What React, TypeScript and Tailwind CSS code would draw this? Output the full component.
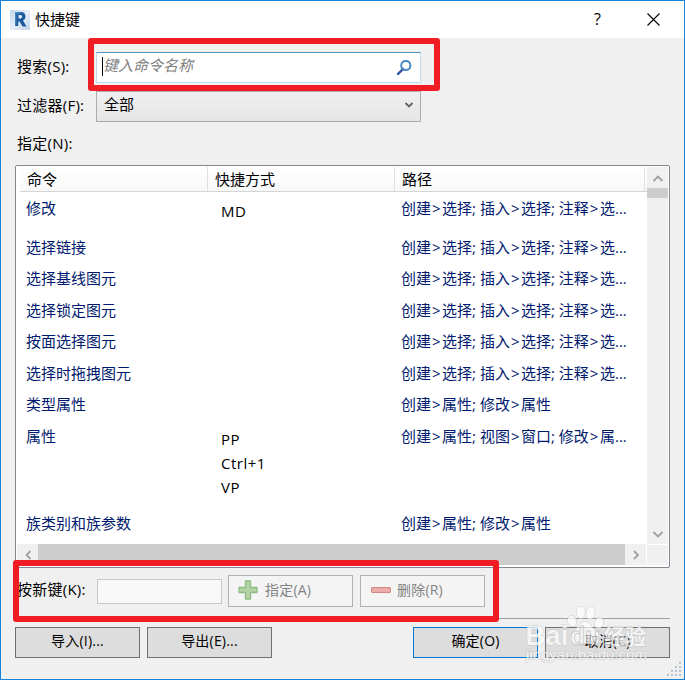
import { Fragment, ReactNode } from 'react';

interface ShortcutRow {
    command: string;
    keys: string[];
    path: string;
}

const SELECT_PATH = '创建>选择; 插入>选择; 注释>选...';

const ROWS: ShortcutRow[] = [
    { command: '修改', keys: ['MD'], path: SELECT_PATH },
    { command: '选择链接', keys: [], path: SELECT_PATH },
    { command: '选择基线图元', keys: [], path: SELECT_PATH },
    { command: '选择锁定图元', keys: [], path: SELECT_PATH },
    { command: '按面选择图元', keys: [], path: SELECT_PATH },
    { command: '选择时拖拽图元', keys: [], path: SELECT_PATH },
    { command: '类型属性', keys: [], path: '创建>属性; 修改>属性' },
    { command: '属性', keys: ['PP', 'Ctrl+1', 'VP'], path: '创建>属性; 视图>窗口; 修改>属...' },
    { command: '族类别和族参数', keys: [], path: '创建>属性; 修改>属性' },
];

function Chevron({ d, className = 'text-[#a0a0a0]' }: { d: string; className?: string }) {
    return (
        <svg width="12" height="12" viewBox="0 0 12 12" fill="none" stroke="currentColor" strokeWidth="1.800" className={className}>
            <path d={d} />
        </svg>
    );
}

function DialogButton({ children, primary = false }: { children: ReactNode; primary?: boolean }) {
    return (
        <button
            className={`w-[125px] h-[31px] border bg-[#dddddd] flex items-center justify-center pb-[3px] text-[14px] tracking-[0.2px] ${
                primary ? 'border-[#0078d7]' : 'border-[#707070]'
            }`}
        >
            {children}
        </button>
    );
}

function CommandPath({ path }: { path: string }) {
    return (
        <div className="whitespace-nowrap">
            {path.split('>').map((part, i) => (
                <Fragment key={i}>
                    {i > 0 && <span className="ml-[1px] mr-[1.500px]">&gt;</span>}
                    {part}
                </Fragment>
            ))}
        </div>
    );
}

function TitleBar() {
    return (
        <div className="h-[37px] bg-white flex items-center shrink-0 pl-[9px] pr-[24px]">
            <svg width="20" height="20" viewBox="0 0 20 20">
                <defs>
                    <linearGradient id="tile" x1="0" y1="0" x2="1" y2="1">
                        <stop offset="0" stopColor="#c3d6ea" />
                        <stop offset="0.5" stopColor="#e8f0f8" />
                        <stop offset="1" stopColor="#bfd2e8" />
                    </linearGradient>
                </defs>
                <rect width="20" height="20" fill="url(#tile)" />
                <path d="M5 2h6.500q4 .5 4 4.500q0 3-2.500 4l3.500 6h-4l-3-5H8.300V16H5z" fill="#1c5a9c" />
                <path d="M5 2h6l-2 2H6.500v10L5 16z" fill="#3c86c4" />
                <path d="M8.500 5h2q1.600.2 1.600 1.700T10.500 8.500h-2z" fill="#dce9f5" />
            </svg>
            <span className="ml-[5px] -mt-[2px]">快捷键</span>
            <span className="ml-auto -mt-[2px] text-[16px]">?</span>
            <svg width="13" height="13" viewBox="0 0 13 13" stroke="#000" strokeWidth="1.100" className="ml-[46px]">
                <path d="M.5.5l12 12M12.500.5l-12 12" />
            </svg>
        </div>
    );
}

function ShortcutList() {
    return (
        <div className="w-[655px] h-[403px] bg-white border border-[#828790] rounded-[2px] p-px pb-[2px] flex flex-col">
            <div className="flex h-[377px]">
                <div className="w-[630px] flex flex-col overflow-hidden">
                    <div className="ml-[3px] h-[25px] shrink-0 flex bg-linear-to-b from-white to-[#f7f8f8] border-b border-[#d5d5d5] leading-[24px]">
                        <div className="w-[188px] pl-[7px] border-r border-[#dfdfdf]">命令</div>
                        <div className="w-[187px] pl-[7px] border-r border-[#dfdfdf]">快捷方式</div>
                        <div className="w-[250px] pl-[7px] border-r border-[#dfdfdf]">路径</div>
                    </div>
                    <div className="pt-[0.500px] text-[#00196e]">
                        {ROWS.map((row) => (
                            <div key={row.command} className="flex min-h-[31.500px] leading-[31.500px]">
                                <div className="w-[204px] pl-[9px]">{row.command}</div>
                                <div className="w-[180px] text-black leading-6 tracking-[0.500px]">
                                    {row.keys.length > 0 && (
                                        <div className="pt-[6px] pb-[9px]">
                                            {row.keys.map((key) => (
                                                <div key={key}>{key}</div>
                                            ))}
                                        </div>
                                    )}
                                </div>
                                <CommandPath path={row.path} />
                            </div>
                        ))}
                    </div>
                </div>
                {/* Vertical scrollbar */}
                <div className="w-[21px] bg-[#f0f0f0] flex flex-col items-center">
                    <div className="h-[21px] flex items-center">
                        <Chevron d="M1.500 9L6 4.500 10.500 9" />
                    </div>
                    <div className="w-full h-[10px] bg-[#cdcdcd]" />
                    <div className="mt-auto h-[20px] flex items-center">
                        <Chevron d="M1.500 4L6 8.500 10.500 4" />
                    </div>
                </div>
            </div>
            {/* Horizontal scrollbar */}
            <div className="flex h-[21px] bg-[#f0f0f0]">
                <div className="w-[21px] flex items-center justify-center">
                    <Chevron d="M8.500 2l-4 4 4 4" />
                </div>
                <div className="w-[587px] bg-[#cdcdcd]" />
                <div className="w-[22px] flex items-center justify-center border-r border-white">
                    <Chevron d="M4 2l4 4-4 4" />
                </div>
                <div className="flex-1 border-t border-white" />
            </div>
        </div>
    );
}

function Watermark() {
    return (
        <svg className="absolute left-[520px] top-[602px] opacity-70" width="140" height="68" viewBox="0 0 140 68">
            <g fill="#fff" stroke="#bdbdbd" strokeWidth="1" paintOrder="stroke">
                <ellipse cx="51" cy="18" rx="4.200" ry="5.500" transform="rotate(-15 51 18)" />
                <ellipse cx="59.700" cy="9.500" rx="4.200" ry="6" />
                <ellipse cx="69.500" cy="10" rx="4.200" ry="6" transform="rotate(10 69.500 10)" />
                <ellipse cx="78" cy="20" rx="4.200" ry="5.500" transform="rotate(15 78 20)" />
                <path d="M64 19c-5 0-6 4-9 7s-6 5-6 9 3 6 7 6 5-1 8-1 6 1 9 1 7-2 7-6-4-6-7-9-4-7-9-7z" />
                <text x="4.500" y="42" fontSize="28" fontWeight="bold" fontFamily="Liberation Sans" textLength="43" lengthAdjust="spacingAndGlyphs">Bai</text>
                <text x="83" y="41" fontSize="21" fontWeight="bold" fontFamily="Noto Sans CJK SC" textLength="42" lengthAdjust="spacingAndGlyphs">经验</text>
                <text x="5" y="56" fontSize="13.500" fontFamily="Liberation Sans" textLength="121" lengthAdjust="spacingAndGlyphs">jingyan.baidu.com</text>
            </g>
            <text x="49" y="42" fontSize="25" fontWeight="bold" fontFamily="Liberation Sans" fill="none" stroke="#c4c4c4" strokeWidth="0.900">du</text>
        </svg>
    );
}

export default function App() {
    return (
        <div className="relative w-[685px] h-[680px] bg-[#f0f0f0] border border-[#1883d7] flex flex-col overflow-hidden text-[15px] leading-[20px] text-black font-['Open_Sans','Noto_Sans_CJK_SC',sans-serif]">
            <TitleBar />

            <div className="pl-[14px] flex flex-col">
                <div className="mt-[14px] flex h-[31px] items-center">
                    <label className="w-[81px] pl-[2px] -mt-[4px] tracking-[0.250px]">搜索(S):</label>
                    <div className="w-[325px] h-[31px] bg-white border border-[#bfdcee] border-t-[#5093c5] flex items-center pl-[5px] pr-[8px]">
                        <span className="w-px h-[19px] -mt-[3px] bg-black" />
                        <span className="-mt-[5px] italic text-[#808080]">键入命令名称</span>
                        <svg width="16" height="16" viewBox="0 0 16 16" fill="none" className="ml-auto">
                            <path d="M2 14L7 9" stroke="#2b549c" strokeWidth="2.400" strokeLinecap="round" />
                            <circle cx="9.800" cy="5.500" r="4.600" stroke="#4a87c7" strokeWidth="2" />
                        </svg>
                    </div>
                </div>
                <div className="mt-[8px] flex h-[31px] items-center">
                    <label className="w-[81px] pl-[2px] -mt-[4px] tracking-[0.250px]">过滤器(F):</label>
                    <div className="w-[325px] h-[31px] border border-[#acacac] bg-linear-to-b from-[#f0f0f0] to-[#e5e5e5] flex items-center pl-[7px] pr-[5px]">
                        <span className="-mt-[6px]">全部</span>
                        <Chevron d="M2.500 4L6 7.500 9.500 4" className="ml-auto -mt-[3px] text-[#606060]" />
                    </div>
                </div>
                <div className="mt-[11px] mb-[12px] pl-[2px] tracking-[0.250px]">指定(N):</div>

                <ShortcutList />

                <div className="mt-[7px] flex h-[32px] items-center">
                    <label className="w-[82px] pl-[2px] -mt-[4px] tracking-[0.250px]">按新键(K):</label>
                    <div className="w-[125px] h-[25px] border border-[#c6c8ca] bg-[#f8f8f8]" />
                    <button className="ml-[6px] w-[125px] h-[32px] border border-[#adb2b5] bg-[#f4f4f4] text-[14px] text-[#838383] flex items-center pl-[9px] pb-[2px]">
                        <svg width="20" height="20" viewBox="0 0 20 20">
                            <path
                                d="M7.500 1h5v6.500H19v5h-6.500V19h-5v-6.500H1v-5h6.500z"
                                fill="#b5d3a3"
                                stroke="#8dbc86"
                                strokeWidth="1.300"
                                strokeLinejoin="round"
                            />
                        </svg>
                        <span className="ml-[7px] tracking-[0.200px]">指定(A)</span>
                    </button>
                    <button className="ml-[7px] w-[125px] h-[32px] border border-[#adb2b5] bg-[#f4f4f4] text-[14px] text-[#838383] flex items-center pl-[10px] pb-[2px]">
                        <svg width="20" height="6" viewBox="0 0 20 6">
                            <rect x=".6" y=".6" width="18.800" height="4.800" rx="1" fill="#eeb0ae" stroke="#d58886" strokeWidth="1.200" />
                        </svg>
                        <span className="ml-[6px] tracking-[0.200px]">删除(R)</span>
                    </button>
                </div>

                <div className="mt-[11px] w-[655px] h-px bg-[#a0a0a0]" />

                <div className="mt-[8px] w-[655px] flex gap-[7px]">
                    <DialogButton>导入(I)...</DialogButton>
                    <DialogButton>导出(E)...</DialogButton>
                    <div className="ml-auto" />
                    <DialogButton primary>确定(O)</DialogButton>
                    <DialogButton>取消(C)</DialogButton>
                </div>
            </div>

            {/* Highlight frames */}
            <div className="absolute left-[87px] top-[37px] w-[352px] h-[53px] border-6 border-[#f01c24] rounded-[3px]" />
            <div className="absolute left-[12px] top-[559px] w-[486px] h-[62px] border-6 border-[#f01c24] rounded-[3px]" />

            <Watermark />

            {/* Resize grip */}
            <svg className="absolute right-[2px] bottom-[2px]" width="15" height="15" viewBox="0 0 15 15" fill="#bcc4d4">
                <path d="M12 0h2v2h-2zM12 4h2v2h-2zM8 4h2v2H8zM12 8h2v2h-2zM8 8h2v2H8zM4 8h2v2H4zM12 12h2v2h-2zM8 12h2v2H8zM4 12h2v2H4zM0 12h2v2H0z" />
            </svg>
        </div>
    );
}
